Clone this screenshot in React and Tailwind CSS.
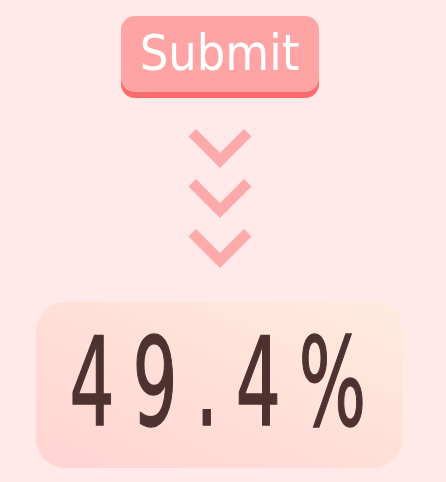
export default function App() {
  const Chevron = () => (
    <svg width="64" height="40" viewBox="0 0 64 40" className="block">
      <path d="M4.25 3.75 L32 31.5 L59.75 3.75" fill="none" stroke="#ffaaaa" strokeWidth="10.6" strokeLinecap="butt" strokeLinejoin="miter" />
    </svg>
  );
  return (
    <div className="w-[446px] h-[482px] bg-[#ffe9e9] flex flex-col items-center pt-4 pr-[7px]">
      <div className="w-[198px] h-[76px] rounded-[14px] bg-[#ffa4a4] shadow-[0_6px_0_#ff6b6b] flex items-center justify-center text-white text-[50px] leading-none pb-[3px]" style={{ fontFamily: '"DejaVu Sans Condensed", "DejaVu Sans", sans-serif' }}>
        Submit
      </div>
      <div className="mt-[37px] flex flex-col items-center gap-[10px]">
        <Chevron />
        <Chevron />
        <Chevron />
      </div>
      <div className="mt-[33px] w-[367px] h-[166px] rounded-[30px] bg-gradient-to-tr from-[#ffd4d2] to-[#ffebdd] flex items-center justify-center text-[#4e3230] leading-none" style={{ fontFamily: '"DejaVu Sans Condensed", "DejaVu Sans", sans-serif' }}>
        <span className="block text-[123px] tracking-[28px] -mr-[14px] scale-x-[0.64] [-webkit-text-stroke:1.5px_#4e3230] pb-[6px]">49.4%</span>
      </div>
    </div>
  );
}
